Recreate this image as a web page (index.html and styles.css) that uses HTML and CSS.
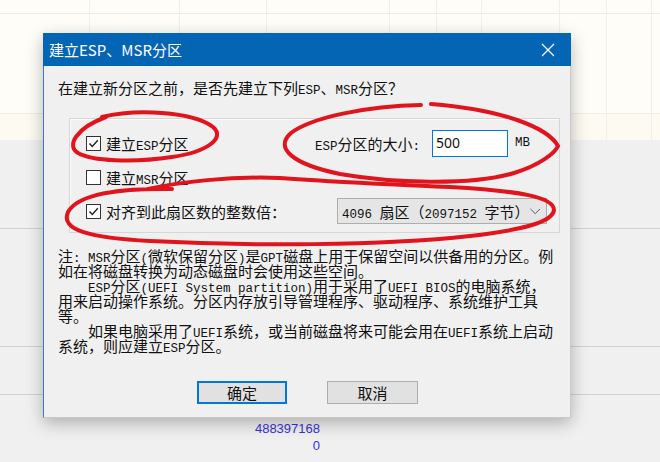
FILE: index.html
```html
<!DOCTYPE html>
<html lang="zh-CN">
<head>
    <meta charset="UTF-8">
    <title>建立ESP、MSR分区</title>
    <link rel="stylesheet" href="styles.css">
</head>
<body>
<div class="desk">
    <!-- background sheet (behind the dialog) -->
    <div class="sheet">
        <div class="cell"></div><div class="cell"></div><div class="cell"></div>
        <div class="cell"></div><div class="cell"></div><div class="cell"></div>
        <div class="cell"></div><div class="cell"></div><div class="cell"></div>
    </div>
    <div class="row row-a"></div>
    <div class="row row-b"></div>
    <div class="row row-c"></div>
    <div class="row row-d">
        <div class="nums">
            <div>488397168</div>
            <div>0</div>
        </div>
    </div>

    <!-- dialog -->
    <div class="dialog">
        <div class="titlebar">
            <span class="title">建立ESP、MSR分区</span>
            <span class="close">
                <svg width="14" height="14" viewBox="0 0 14 14"><path d="M1 1 L13 13 M13 1 L1 13" stroke="#fff" stroke-width="1.2" fill="none"/></svg>
            </span>
        </div>
        <div class="dlg-body">
            <p class="ask">在建立新分区之前，是否先建立下列<span class="lat">ESP</span>、<span class="lat">MSR</span>分区？</p>

            <div class="group">
                <div class="opt-row">
                    <label class="check"><span class="box"><svg width="13" height="13" viewBox="0 0 13 13"><path d="M2.5 6.5 L5.3 9.5 L10.8 3.2" stroke="#222" stroke-width="1.4" fill="none"/></svg></span><span>建立<span class="lat">ESP</span>分区</span></label>
                    <div class="size">
                        <span><span class="lat">ESP</span>分区的大小<span class="lat">:</span></span>
                        <span class="field">500</span>
                        <span class="lat unit">MB</span>
                    </div>
                </div>
                <div class="opt-row">
                    <label class="check"><span class="box"></span><span>建立<span class="lat">MSR</span>分区</span></label>
                </div>
                <div class="opt-row">
                    <label class="check"><span class="box"><svg width="13" height="13" viewBox="0 0 13 13"><path d="M2.5 6.5 L5.3 9.5 L10.8 3.2" stroke="#222" stroke-width="1.4" fill="none"/></svg></span><span>对齐到此扇区数的整数倍：</span></label>
                    <div class="combo">
                        <span><span class="lat">4096 </span>扇区（<span class="lat">2097152 </span>字节）</span>
                        <svg width="11" height="7" viewBox="0 0 11 7"><path d="M0.5 0.8 L5.5 5.8 L10.5 0.8" stroke="#555" stroke-width="1" fill="none"/></svg>
                    </div>
                </div>
            </div>

            <div class="notes">
                <div class="line">注<span class="lat">: MSR</span>分区<span class="lat">(</span>微软保留分区<span class="lat">)</span>是<span class="lat">GPT</span>磁盘上用于保留空间以供备用的分区。例</div>
                <div class="line">如在将磁盘转换为动态磁盘时会使用这些空间。</div>
                <div class="line indent"><span class="lat">ESP</span>分区<span class="lat">(UEFI System partition)</span>用于采用了<span class="lat">UEFI BIOS</span>的电脑系统，</div>
                <div class="line">用来启动操作系统。分区内存放引导管理程序、驱动程序、系统维护工具</div>
                <div class="line">等。</div>
                <div class="line indent">如果电脑采用了<span class="lat">UEFI</span>系统，或当前磁盘将来可能会用在<span class="lat">UEFI</span>系统上启动</div>
                <div class="line">系统，则应建立<span class="lat">ESP</span>分区。</div>
            </div>

            <div class="buttons">
                <button class="btn btn-default">确定</button>
                <button class="btn">取消</button>
            </div>
        </div>
    </div>

    <!-- red hand-drawn marks -->
    <svg class="marks" width="660" height="462" viewBox="0 0 660 462">
        <g stroke="#e0141c" stroke-width="4" fill="none" stroke-linecap="round">
            <path d="M102 117 C135 109, 192 111, 213 127 C226 138, 207 152, 172 157 C132 163, 92 161, 78 153 C66 146, 76 128, 106 117"/>
            <path d="M421 105 C368 106, 312 117, 291 133 C274 148, 292 164, 340 174 C392 183, 470 186, 514 173 C540 165, 555 153, 558 146 C548 128, 505 110, 431 104"/>
            <path d="M172 189 C120 188, 78 194, 68 212 C60 230, 90 238, 150 241 C250 246, 380 246, 470 236 C522 230, 553 222, 554 210 C554 197, 520 191, 450 187 C380 184, 320 181, 280 178 C230 176, 180 182, 148 189"/>
        </g>
    </svg>
</div>
</body>
</html>
```

FILE: styles.css
```css
/* page */
body {
    margin: 0;
    font-family: "Noto Sans CJK SC", sans-serif;
    color: #111;
}

.desk {
    position: relative;
    width: 660px;
    height: 462px;
    overflow: hidden;
    background: #f0f0f0;
}

/* spreadsheet-like area behind the dialog */
.sheet {
    display: flex;
    height: 140px;
    background-color: #fefdf7;
    background-image:
        linear-gradient(#efeee5, #efeee5),
        linear-gradient(#efeee5, #efeee5),
        linear-gradient(#fdfaf2, #fdfaf2);
    background-size: 100% 1px, 100% 1px, 100% 26px;
    background-position: 0 13px, 0 113px, 0 114px;
    background-repeat: no-repeat;
}

.cell {
    flex: none;
    border-right: 1px solid #f1f0e8;
}

.cell:nth-child(1) { width: 89px; }
.cell:nth-child(2) { width: 89px; }
.cell:nth-child(3) { width: 86px; }
.cell:nth-child(4) { width: 122px; }
.cell:nth-child(5) { width: 46px; }
.cell:nth-child(6) { width: 44px; }
.cell:nth-child(7) { width: 77px; }
.cell:nth-child(8) { width: 46px; }
.cell:nth-child(9) { width: 44px; }

.row {
    box-sizing: border-box;
    border-bottom: 1px solid #d2d2d2;
}

.row-a { height: 89px; }
.row-b { height: 118px; }
.row-c { height: 48px; }
.row-d { border-bottom: none; }

.nums {
    width: 320px;
    padding-top: 25px;
    text-align: right;
    font-family: "Liberation Sans", sans-serif;
    font-size: 13px;
    line-height: 17px;
    color: #3434d4;
}

/* dialog window */
.dialog {
    position: absolute;
    left: 43px;
    top: 33px;
    width: 528px;
    height: 385px;
    box-sizing: border-box;
    background: #f0f0f0;
    border: 1px solid #c9c9c9;
    border-left-color: #3a78c0;
    border-top: none;
    box-shadow: 0 5px 16px rgba(0, 0, 0, 0.28);
}

.titlebar {
    display: flex;
    align-items: center;
    justify-content: space-between;
    height: 33px;
    margin-left: -1px;
    margin-right: -1px;
    padding-left: 6px;
    background: #0465b4;
    color: #fff;
    font-size: 15px;
}

.close {
    display: flex;
    align-items: center;
    justify-content: center;
    width: 46px;
    height: 33px;
}

.dlg-body {
    padding: 12px 10px 0 14px;
}

.lat {
    font-family: "Liberation Mono", monospace;
    font-size: 12.5px;
    line-height: 1;
}

.ask {
    margin: 0;
    font-size: 15px;
    line-height: 20px;
}

/* group box */
.group {
    box-sizing: border-box;
    height: 115px;
    margin: 20px 0 0 11px;
    padding: 7px 12px 0 16px;
    border: 1px solid #d6d6d6;
    box-shadow: inset 1px 1px 0 #fbfbfb;
}

.opt-row {
    display: flex;
    align-items: center;
    height: 34px;
    font-size: 15px;
}

.check {
    display: flex;
    align-items: center;
    white-space: nowrap;
}

.box {
    display: flex;
    align-items: center;
    justify-content: center;
    width: 13px;
    height: 13px;
    margin-right: 5px;
    border: 1px solid #333;
    background: #fff;
}

.size {
    display: flex;
    align-items: center;
    margin-left: auto;
    margin-right: 17px;
}

.field {
    box-sizing: border-box;
    width: 76px;
    height: 27px;
    margin-left: 12px;
    padding: 2px 3px 0;
    border: 1px solid #0078d7;
    background: #fff;
    font-family: "Noto Sans", sans-serif;
    font-size: 14px;
    line-height: 20px;
}

.unit {
    margin-left: 7px;
}

.combo {
    display: flex;
    align-items: center;
    justify-content: space-between;
    box-sizing: border-box;
    width: 210px;
    height: 26px;
    margin-left: auto;
    padding: 0 6px 0 4px;
    border: 1px solid #adadad;
    background: #e5e5e5;
    white-space: nowrap;
}

/* explanation text */
.notes {
    margin-top: 15px;
    font-size: 15px;
    white-space: nowrap;
}

.line {
    height: 15px;
    line-height: 15px;
}

.indent {
    padding-left: 30px;
}

/* buttons */
.buttons {
    display: flex;
    gap: 40px;
    margin: 28px 0 0 139px;
}

.btn {
    box-sizing: border-box;
    width: 91px;
    height: 23px;
    padding: 0;
    border: 1px solid #adadad;
    background: #e1e1e1;
    font-family: "Noto Sans CJK SC", sans-serif;
    font-size: 15px;
    line-height: 20px;
    color: #111;
}

.btn-default {
    width: 90px;
    border: 2px solid #0078d7;
}

/* red ink marks over the screenshot */
.marks {
    position: absolute;
    left: 0;
    top: 0;
    pointer-events: none;
}
```
